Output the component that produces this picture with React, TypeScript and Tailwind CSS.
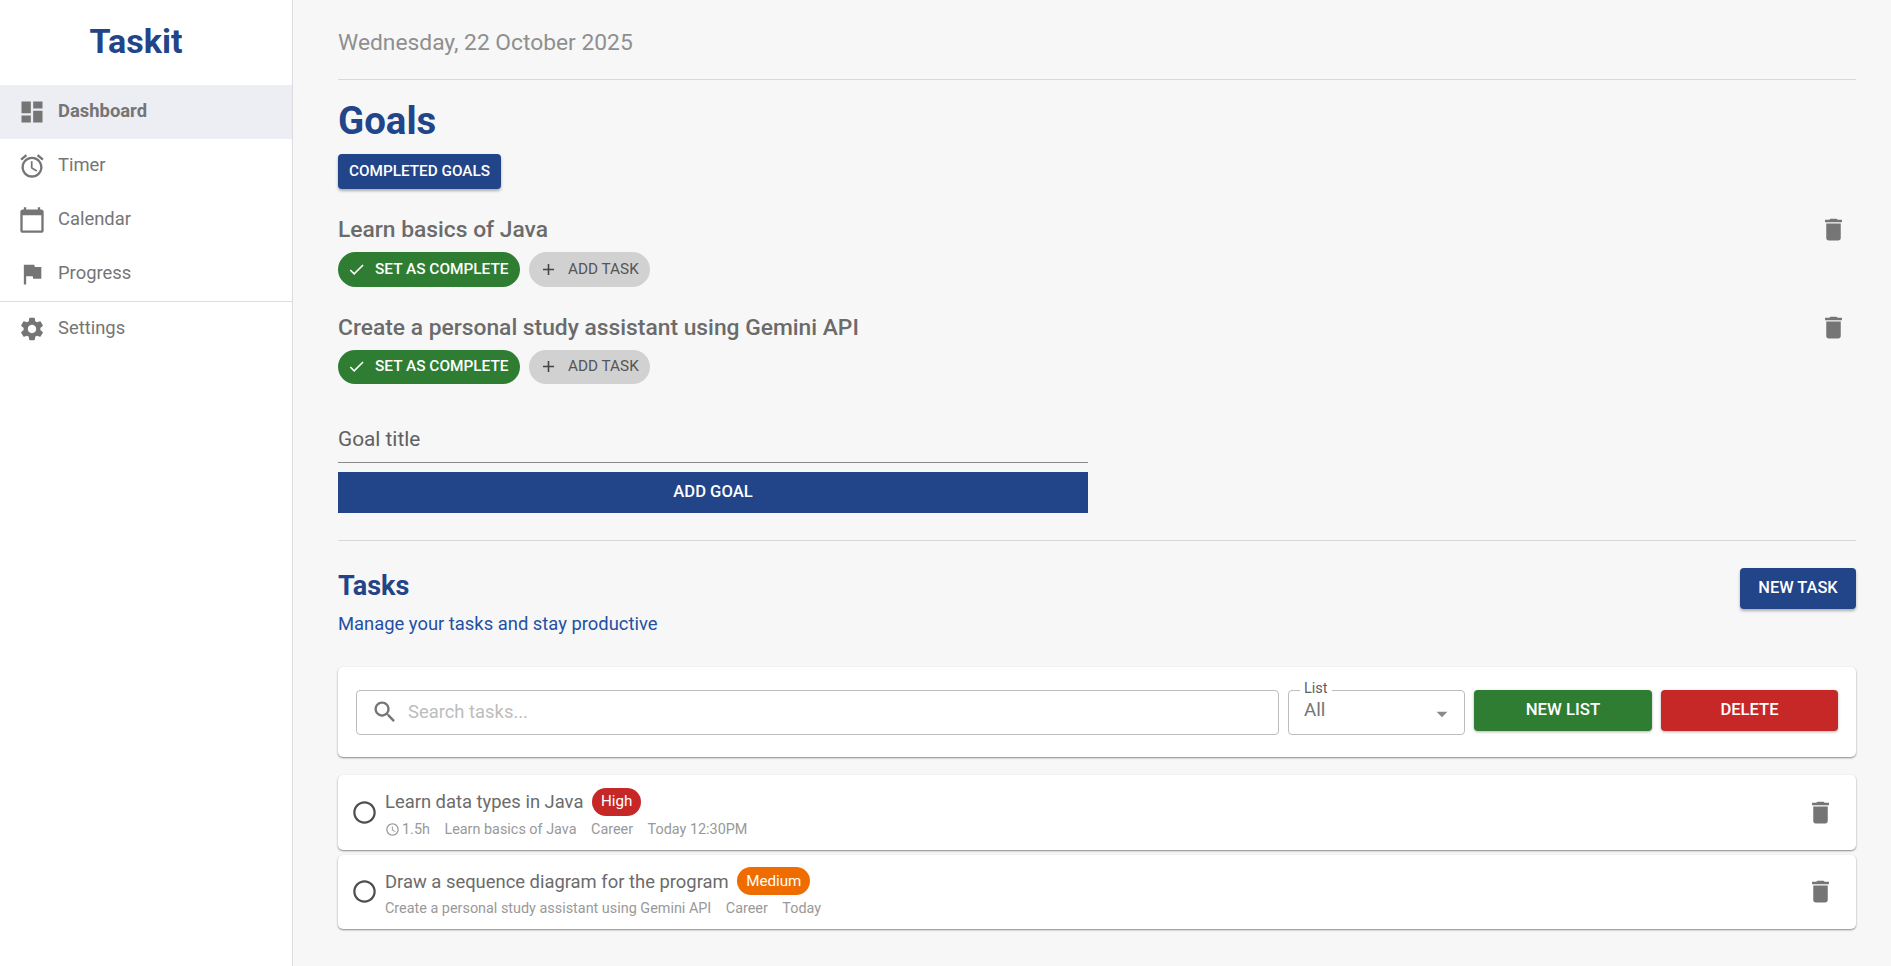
import React from "react";

const P = {
  dashboard: "M3 13h8V3H3v10zm0 8h8v-6H3v6zm10 0h8V11h-8v10zm0-18v6h8V3h-8z",
  alarm: "m22 5.72-4.6-3.86-1.29 1.53 4.6 3.86zM7.88 3.39 6.6 1.86 2 5.71l1.29 1.53zM12.5 8H11v6l4.75 2.85.75-1.23-4-2.37zM12 4c-4.97 0-9 4.03-9 9s4.03 9 9 9 9-4.03 9-9-4.03-9-9-9m0 16c-3.87 0-7-3.13-7-7s3.13-7 7-7 7 3.13 7 7-3.13 7-7 7",
  calendar: "M20 3h-1V1h-2v2H7V1H5v2H4c-1.1 0-2 .9-2 2v16c0 1.1.9 2 2 2h16c1.1 0 2-.9 2-2V5c0-1.1-.9-2-2-2zm0 18H4V8h16v13z",
  flag: "M14.4 6 14 4H5v17h2v-7h5.6l.4 2h7V6z",
  gear: "M19.14 12.94c.04-.3.06-.61.06-.94 0-.32-.02-.64-.07-.94l2.03-1.58c.18-.14.23-.41.12-.61l-1.92-3.32c-.12-.22-.37-.29-.59-.22l-2.39.96c-.5-.38-1.03-.7-1.62-.94l-.36-2.54c-.04-.24-.24-.41-.48-.41h-3.84c-.24 0-.43.17-.47.41l-.36 2.54c-.59.24-1.13.57-1.62.94l-2.39-.96c-.22-.08-.47 0-.59.22L2.74 8.87c-.12.21-.08.47.12.61l2.03 1.58c-.05.3-.09.63-.09.94s.02.64.07.94l-2.03 1.58c-.18.14-.23.41-.12.61l1.92 3.32c.12.22.37.29.59.22l2.39-.96c.5.38 1.03.7 1.62.94l.36 2.54c.05.24.24.41.48.41h3.84c.24 0 .44-.17.47-.41l.36-2.54c.59-.24 1.13-.56 1.62-.94l2.39.96c.22.08.47 0 .59-.22l1.92-3.32c.12-.22.07-.47-.12-.61l-2.01-1.58zM12 15.6c-1.98 0-3.6-1.62-3.6-3.6s1.62-3.6 3.6-3.6 3.6 1.62 3.6 3.6-1.62 3.6-3.6 3.6z",
  trash: "M6 19c0 1.1.9 2 2 2h8c1.1 0 2-.9 2-2V7H6v12zM19 4h-3.5l-1-1h-5l-1 1H5v2h14V4z",
  search: "M15.5 14h-.79l-.28-.27C15.41 12.59 16 11.11 16 9.5 16 5.91 13.09 3 9.5 3S3 5.91 3 9.5 5.91 16 9.5 16c1.61 0 3.09-.59 4.23-1.57l.27.28v.79l5 4.99L20.49 19l-4.99-5zm-6 0C7.01 14 5 11.99 5 9.5S7.01 5 9.5 5 14 7.01 14 9.5 11.99 14 9.5 14z",
  check: "M9 16.17 4.83 12l-1.42 1.41L9 19 21 7l-1.41-1.41z",
  plus: "M19 13h-6v6h-2v-6H5v-2h6V5h2v6h6v2z",
  clock: "M11.99 2C6.47 2 2 6.48 2 12s4.47 10 9.99 10C17.52 22 22 17.52 22 12S17.52 2 11.99 2zM12 20c-4.42 0-8-3.58-8-8s3.58-8 8-8 8 3.58 8 8-3.58 8-8 8zm.5-13H11v6l5.25 3.15.75-1.23-4.5-2.67z",
  circle: "M12 2C6.47 2 2 6.47 2 12s4.47 10 10 10 10-4.47 10-10S17.53 2 12 2zm0 18c-4.41 0-8-3.59-8-8s3.59-8 8-8 8 3.59 8 8-3.59 8-8 8z",
  caret: "M7 10l5 5 5-5z",
};

function Icon({ d, className }: { d: string; className: string }) {
  return (
    <svg viewBox="0 0 24 24" className={className} fill="currentColor">
      <path d={d} />
    </svg>
  );
}

function NavItem({ d, label, active }: { d: string; label: string; active?: boolean }) {
  return (
    <div className={`flex h-[54px] items-center pl-[18px] text-[18.4px] text-[#757575] ${active ? "bg-[#eceef4] font-bold" : ""}`}>
      <Icon d={d} className="w-[28px] h-[28px] shrink-0 text-[#757575]" />
      <span className="ml-[12px] pb-[3px]">{label}</span>
    </div>
  );
}

function Goal({ title }: { title: string }) {
  return (
    <div className="flex items-start justify-between">
      <div>
        <div className="h-[28px] pt-[1px] text-[22.8px] leading-[28px] font-medium text-[#6b6b6b]">{title}</div>
        <div className="mt-[9px] flex gap-[9px]">
          <div className="flex h-[34.5px] w-[182px] items-center rounded-full bg-[#2e7d32] pl-[9px] text-[15.4px] font-medium text-white">
            <Icon d={P.check} className="w-[19px] h-[19px]" />
            <span className="ml-[9px]">SET AS COMPLETE</span>
          </div>
          <div className="flex h-[34.5px] w-[121px] items-center rounded-full bg-[#d1d1d1] pl-[10px] text-[15.3px] text-[#555555]">
            <Icon d={P.plus} className="w-[19px] h-[19px] text-[#444444]" />
            <span className="ml-[10px]">ADD TASK</span>
          </div>
        </div>
      </div>
      <Icon d={P.trash} className="mr-[8px] w-[29px] h-[29px] text-[#757575]" />
    </div>
  );
}

function TaskRow({ title, badge, badgeClass, meta, clock }: { title: string; badge: string; badgeClass: string; meta: string[]; clock?: string }) {
  return (
    <div className="flex h-[74.5px] items-center rounded-[5px] bg-white pl-[13px] pr-[21px] shadow-[0_1px_2px_rgba(0,0,0,0.45)]">
      <Icon d={P.circle} className="w-[27px] h-[27px] shrink-0 text-[#4f4f4f]" />
      <div className="ml-[7px] flex-1 pt-[3px]">
        <div className="flex items-center">
          <span className="text-[18.4px] leading-[27px] text-[#6b6b6b]">{title}</span>
          <span className={`ml-[8.5px] flex h-[28px] items-center rounded-full px-[9px] text-[15.2px] text-white ${badgeClass}`}>{badge}</span>
        </div>
        <div className="mt-[4px] flex items-center gap-[14.5px] text-[14.4px] leading-[20px] text-[#999999]">
          {clock && (
            <span className="flex items-center gap-[2px]">
              <Icon d={P.clock} className="w-[15px] h-[15px]" />
              {clock}
            </span>
          )}
          {meta.map((m) => (
            <span key={m}>{m}</span>
          ))}
        </div>
      </div>
      <Icon d={P.trash} className="w-[29px] h-[29px] text-[#757575]" />
    </div>
  );
}

export default function App() {
  return (
    <div className="flex min-h-[966px] bg-[#f7f7f7] font-['Roboto',sans-serif]">
      <aside className="w-[293px] shrink-0 border-r border-[#dddddd] bg-white">
        <div className="flex h-[85px] items-center justify-center pr-[20px] pb-[3px] text-[34px] font-bold text-[#224488]">Taskit</div>
        <NavItem d={P.dashboard} label="Dashboard" active />
        <NavItem d={P.alarm} label="Timer" />
        <NavItem d={P.calendar} label="Calendar" />
        <NavItem d={P.flag} label="Progress" />
        <div className="border-t border-[#dddddd]">
          <NavItem d={P.gear} label="Settings" />
        </div>
      </aside>

      <main className="flex-1 pl-[45px] pr-[35px]">
        <div className="flex h-[80px] items-center border-b border-[#d9d9d9] pt-[8px] text-[22.8px] text-[#8f8f8f]">Wednesday, 22 October 2025</div>

        <h1 className="mt-[18px] text-[38.4px] leading-[46px] font-bold text-[#224488]">Goals</h1>
        <button className="mt-[10px] flex h-[35px] w-[163px] items-center justify-center rounded-[4px] bg-[#224488] text-[15.3px] font-medium text-white shadow-[0_2px_3px_rgba(0,0,0,0.3)]">COMPLETED GOALS</button>

        <div className="mt-[26px]">
          <Goal title="Learn basics of Java" />
        </div>
        <div className="mt-[26px]">
          <Goal title="Create a personal study assistant using Gemini API" />
        </div>

        <div className="mt-[32px] w-[750px]">
          <div className="h-[47px] border-b border-[#8a8a8a] pt-[11px] text-[20.8px] leading-[24px] text-[#616161]">Goal title</div>
          <button className="mt-[9px] flex h-[41px] w-full items-center justify-center bg-[#224488] text-[16.6px] font-medium text-white">ADD GOAL</button>
        </div>

        <div className="mt-[27px] border-t border-[#d9d9d9]" />

        <div className="mt-[27px] flex items-start justify-between">
          <div>
            <h2 className="text-[27px] leading-[36px] font-bold text-[#224488]">Tasks</h2>
            <p className="mt-[8px] text-[18.4px] leading-[24px] text-[#2250a4]">Manage your tasks and stay productive</p>
          </div>
          <button className="flex h-[41px] w-[116px] items-center justify-center rounded-[4px] bg-[#224488] text-[16.4px] font-medium text-white shadow-[0_2px_3px_rgba(0,0,0,0.3)]">NEW TASK</button>
        </div>

        <div className="mt-[31px] flex h-[90px] items-center gap-[9px] rounded-[5px] bg-white px-[18px] shadow-[0_1px_2px_rgba(0,0,0,0.45)]">
          <div className="flex h-[45px] flex-1 items-center rounded-[4px] border border-[#bdbdbd] pl-[14px]">
            <Icon d={P.search} className="w-[28px] h-[28px] text-[#757575]" />
            <span className="ml-[9px] text-[18.4px] text-[#bdbdbd]">Search tasks...</span>
          </div>
          <div className="relative flex h-[45px] w-[177px] items-center rounded-[4px] border border-[#bdbdbd] pb-[3px] pl-[15px] text-[18.8px] text-[#757575]">
            <span className="absolute -top-[10px] left-[11px] bg-white px-[4px] text-[14.5px] leading-[16px] text-[#616161]">List</span>
            All
            <Icon d={P.caret} className="absolute right-[9px] top-[10px] w-[26px] h-[26px] text-[#8a8a8a]" />
          </div>
          <button className="mb-[4px] flex h-[41px] w-[178px] items-center justify-center rounded-[4px] bg-[#2e7d32] text-[16.8px] font-medium text-white shadow-[0_1px_3px_rgba(0,0,0,0.3)]">NEW LIST</button>
          <button className="mb-[4px] flex h-[41px] w-[177px] items-center justify-center rounded-[4px] bg-[#c62828] text-[16.6px] font-medium text-white shadow-[0_1px_3px_rgba(0,0,0,0.3)]">DELETE</button>
        </div>

        <div className="mt-[18px] flex flex-col gap-[5px]">
          <TaskRow title="Learn data types in Java" badge="High" badgeClass="bg-[#c62828]" clock="1.5h" meta={["Learn basics of Java", "Career", "Today 12:30PM"]} />
          <TaskRow title="Draw a sequence diagram for the program" badge="Medium" badgeClass="bg-[#ef6c00]" meta={["Create a personal study assistant using Gemini API", "Career", "Today"]} />
        </div>
      </main>
    </div>
  );
}
